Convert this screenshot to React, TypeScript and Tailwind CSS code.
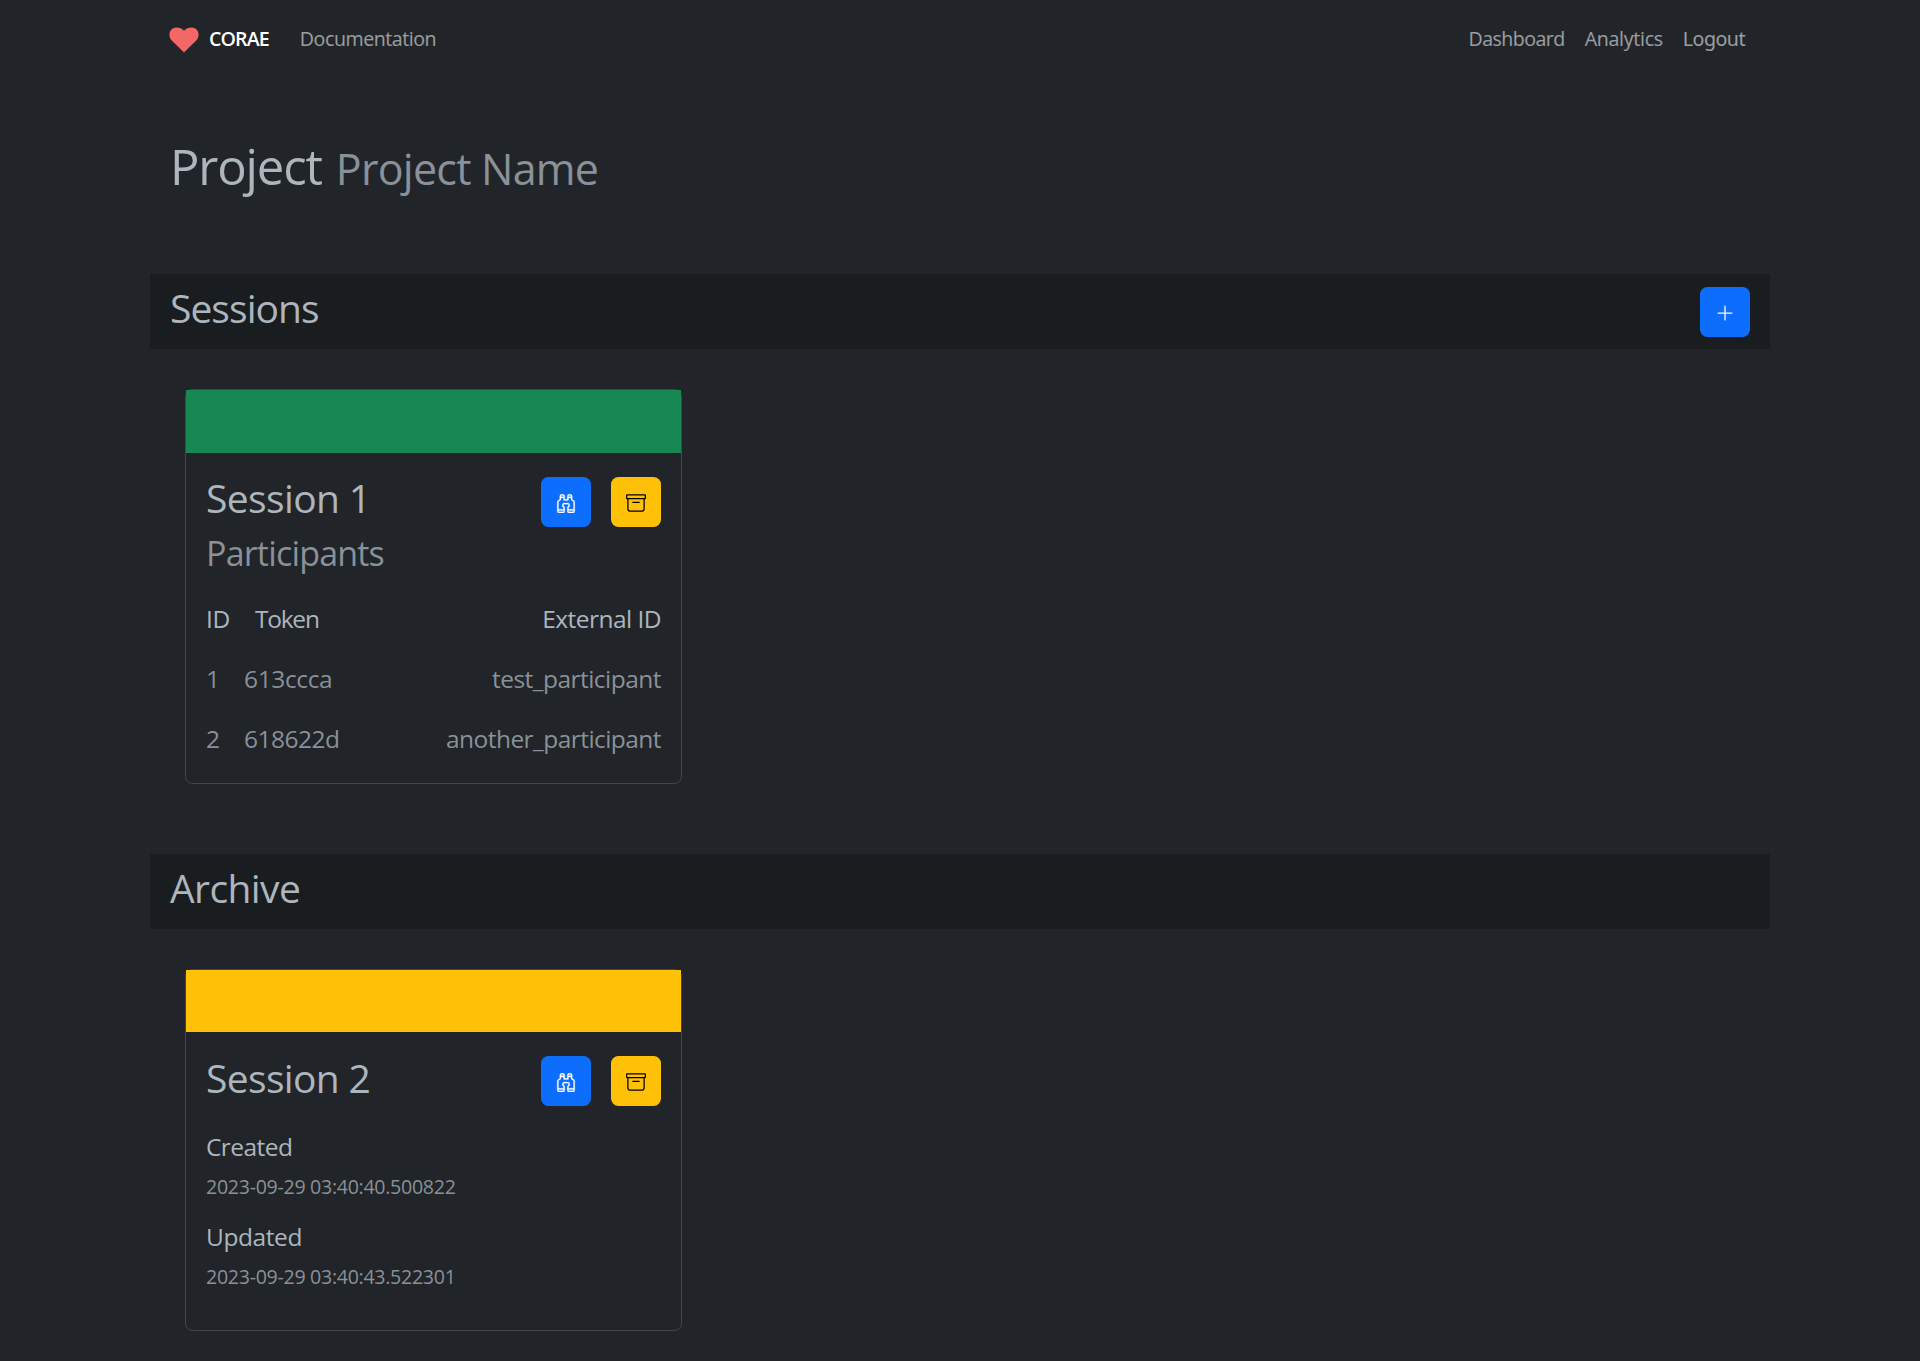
import React from 'react';
import { BsArchive, BsBinoculars, BsPlusLg } from 'react-icons/bs';

function IconButton({ tone, className = '', label, children }: { tone: 'blue' | 'yellow'; className?: string; label: string; children: React.ReactNode }) {
  const color = tone === 'blue' ? 'bg-[#0d6efd] text-white' : 'bg-[#ffc107] text-black';
  return (
    <button aria-label={label} className={`flex h-[50px] w-[50px] shrink-0 items-center justify-center rounded-[7.5px] pt-0.5 ${color} ${className}`}>
      {children}
    </button>
  );
}

function SectionBar({ children, action }: { children: React.ReactNode; action?: React.ReactNode }) {
  return (
    <div className="flex h-[75px] items-start justify-between bg-[#1a1d20] px-5 text-[39px] leading-[48px]">
      {children}
      {action}
    </div>
  );
}

function SessionCard({ title, band, titleTop, buttonTop, className, children }: { title: React.ReactNode; band: string; titleTop: string; buttonTop: string; className: string; children: React.ReactNode }) {
  return (
    <article className={`mt-10 ml-[35px] w-[497px] rounded-[7.5px] border border-[#424649] ${className}`}>
      <div className={band} />
      <div className="px-5">
        <div className={`flex items-start ${titleTop}`}>
          <h3 className="grow text-[39px] leading-[48px]">{title}</h3>
          <IconButton tone="blue" label="Observe" className={buttonTop}><BsBinoculars size={20} strokeWidth={0.2} /></IconButton>
          <IconButton tone="yellow" label="Archive" className={`ml-5 ${buttonTop}`}><BsArchive size={20} /></IconButton>
        </div>
        {children}
      </div>
    </article>
  );
}

export default function App() {
  return (
    <div className="h-[1361px] w-full overflow-hidden bg-[#212529] font-['Open_Sans',sans-serif] font-normal text-[#adb5bd]">
      <div className="mx-auto w-[1620px]">
        <nav className="flex h-[77px] items-center pr-[25px] pl-[19px] text-[19.6px] leading-[30px] text-white/55">
          <svg viewBox="0 0 30 26" className="mt-0.5 h-[26px] w-[30px]" fill="#f46767">
            <path d="M15 25.5 2.8 13.6C-.3 10.300-.3 5.500 2.300 2.700 5.500-.6 11.300-.1 15 3.800 18.700-.1 24.500-.6 27.700 2.700 30.300 5.500 30.300 10.300 27.200 13.600Z" />
          </svg>
          <span className="ml-[10px] font-semibold tracking-[-0.045em] text-white">CORAE</span>
          <span className="ml-[31px] grow tracking-[-0.023em]">Documentation</span>
          <div className="flex gap-5">
            <span className="tracking-[-0.028em]">Dashboard</span>
            <span className="tracking-[-0.015em]">Analytics</span>
            <span className="font-['Noto_Sans',sans-serif] tracking-[-0.0255em]">Logout</span>
          </div>
        </nav>

        <h1 className="mt-[59px] flex h-[60px] items-baseline pl-5 text-[49px] leading-[60px]">
          <span className="tracking-[-0.0232em]">Project</span>
          <small className="ml-[14px] text-[43px] tracking-[-0.0179em] text-[#adb5bd]/75">Project Name</small>
        </h1>

        <main className="mt-[78px]">
          <SectionBar action={<IconButton tone="blue" label="Add session" className="mt-[13px]"><BsPlusLg size={20} /></IconButton>}>
            <h2 className="mt-2.5 tracking-[-0.0245em]">Sessions</h2>
          </SectionBar>
          <SessionCard title={<span className="tracking-[-0.016em]">Session 1</span>} band="h-[63px] bg-[#198754]" titleTop="mt-[21px]" buttonTop="mt-[3px]" className="h-[395px]">
            <h4 className="mt-[5px] text-[34px] leading-[42px] tracking-[-0.0237em] text-[#adb5bd]/75">Participants</h4>
            <div className="mt-[15px] text-[24.5px] leading-[60px]">
              <div className="flex gap-[25px]">
                <span className="tracking-[-0.014em]">ID</span>
                <span className="grow tracking-[-0.05em]">Token</span>
                <span className="tracking-[-0.0223em]">External ID</span>
              </div>
              <div className="flex gap-6 text-[#adb5bd]/75">
                <span>1</span>
                <span className="grow tracking-[-0.0152em]">613ccca</span>
                <span className="tracking-[-0.0215em]">test_participant</span>
              </div>
              <div className="flex gap-6 text-[#adb5bd]/75">
                <span>2</span>
                <span className="grow tracking-[-0.0208em]">618622d</span>
                <span className="tracking-[-0.0225em]">another_participant</span>
              </div>
            </div>
          </SessionCard>

          <div className="mt-[70px]">
            <SectionBar>
              <h2 className="mt-2.5 tracking-[-0.0151em]">Archive</h2>
            </SectionBar>
          </div>
          <SessionCard title={<span className="tracking-[-0.017em]">Session 2</span>} band="h-[62px] bg-[#ffc107]" titleTop="mt-[22px]" buttonTop="mt-[2px]" className="h-[362px]">
            <h5 className="mt-[26px] text-[24.5px] leading-[30px] tracking-[-0.023em]">Created</h5>
            <p className="mt-2.5 text-[19.6px] leading-[30px] tracking-[-0.015em] text-[#adb5bd]/75">2023-09-29 03:40:40.500822</p>
            <h5 className="mt-5 text-[24.5px] leading-[30px] tracking-[-0.017em]">Updated</h5>
            <p className="mt-2.5 text-[19.6px] leading-[30px] tracking-[-0.015em] text-[#adb5bd]/75">2023-09-29 03:40:43.522301</p>
          </SessionCard>
        </main>
      </div>
    </div>
  );
}
